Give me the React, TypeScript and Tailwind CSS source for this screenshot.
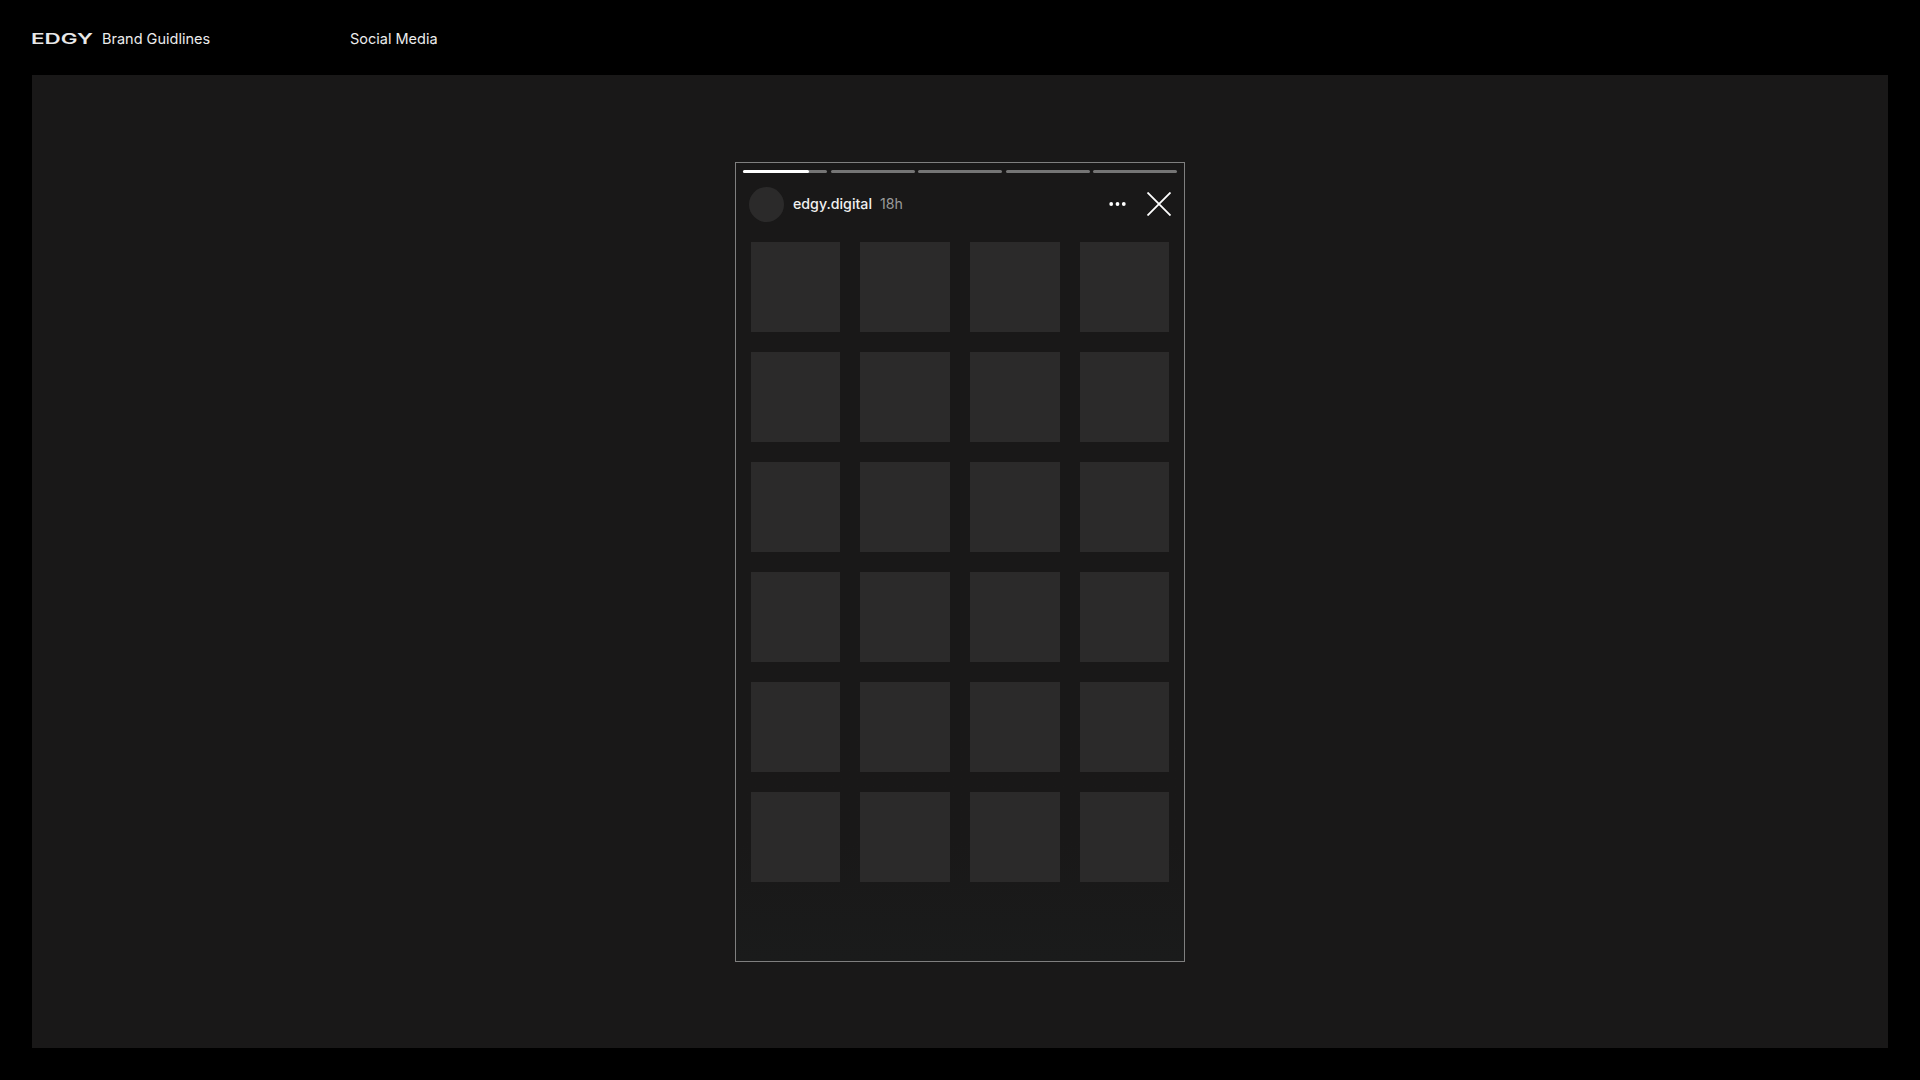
const tiles = Array.from({ length: 24 })

function Progress() {
  return (
    <div className="flex gap-[3.5px] px-[7px] pt-[7px]">
      <div className="h-[3px] flex-1 rounded-full bg-[#757575]">
        <div className="h-[3px] w-[79%] rounded-full bg-white" />
      </div>
      <div className="h-[3px] flex-1 rounded-full bg-[#757575]" />
      <div className="h-[3px] flex-1 rounded-full bg-[#757575]" />
      <div className="h-[3px] flex-1 rounded-full bg-[#757575]" />
      <div className="h-[3px] flex-1 rounded-full bg-[#757575]" />
    </div>
  )
}

export default function App() {
  return (
    <div className="flex h-[1080px] w-[1920px] flex-col overflow-hidden bg-black pb-8 font-['Inter',sans-serif] text-white">
      <header className="flex h-[75px] shrink-0 items-center px-8 pt-[2px] text-[14.5px] text-[#ececec]">
        <div className="flex w-[318px] items-center">
          <span className="-ml-[1px] inline-block w-[71px] origin-left scale-x-[1.6] text-[14px] leading-none font-semibold text-[#e8e8e8]">EDGY</span>
          <span>Brand Guidlines</span>
        </div>
        <span>Social Media</span>
      </header>

      <main className="mx-8 flex flex-1 justify-center bg-[#191818] pt-[87px]">
        <div className="h-[800px] w-[450px] border border-[#7f7f7f] bg-gradient-to-b from-[#191818] from-85% to-[#1a1b1b]">
          <Progress />
          <div className="mt-[14px] flex h-[35px] items-center pr-[13px] pl-[13px]">
            <div className="h-[35px] w-[35px] rounded-full bg-[#2b2a2a]" />
            <span className="mb-[2px] ml-[9px] text-[14.2px] font-medium text-[#f0f0f0]">edgy.digital</span>
            <span className="mb-[2px] ml-[8px] text-[14.2px] text-[#9a9a9a]">18h</span>
            <svg className="mb-[2px] ml-auto h-[6px] w-[17px]" viewBox="0 0 17 6" fill="white">
              <circle cx="2.2" cy="3" r="1.9" />
              <circle cx="8.5" cy="3" r="1.9" />
              <circle cx="14.8" cy="3" r="1.9" />
            </svg>
            <svg className="mb-[1px] ml-[21px] h-[24px] w-[24px]" viewBox="0 0 24 24" fill="none" stroke="white" strokeWidth="1.8">
              <path d="M0.5 0.5 L23.5 23.5 M23.5 0.5 L0.5 23.5" />
            </svg>
          </div>
          <div className="mt-5 ml-[14.7px] grid w-[418.6px] grid-cols-4 gap-x-[20.2px] gap-y-5">
            {tiles.map((_, i) => (
              <div key={i} className="h-[90px] bg-[#2b2a2a]" />
            ))}
          </div>
        </div>
      </main>
    </div>
  )
}
